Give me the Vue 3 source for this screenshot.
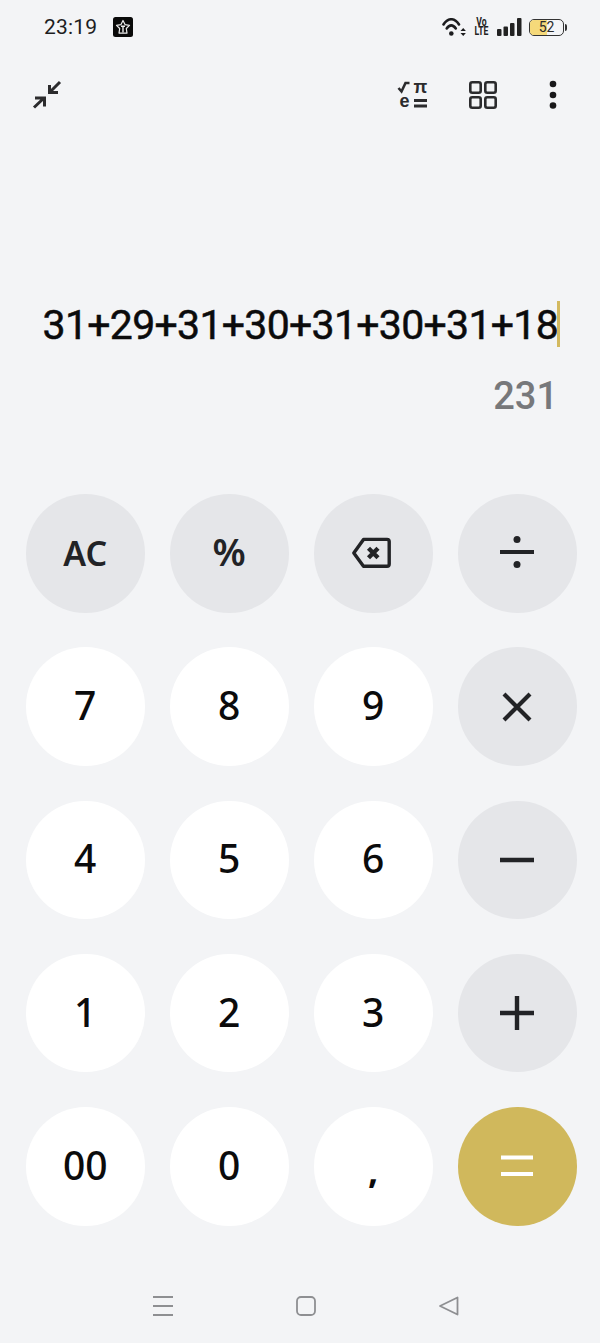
<script setup>
const keys = [
  { label: 'AC', kind: 'op', cls: 'ac' },
  { label: '%', kind: 'op', cls: 'pct' },
  { icon: 'back', kind: 'op' },
  { icon: 'divide', kind: 'op' },
  { label: '7' },
  { label: '8' },
  { label: '9' },
  { icon: 'times', kind: 'op' },
  { label: '4' },
  { label: '5' },
  { label: '6' },
  { icon: 'minus', kind: 'op' },
  { label: '1' },
  { label: '2' },
  { label: '3' },
  { icon: 'plus', kind: 'op' },
  { label: '00' },
  { label: '0' },
  { label: ',', cls: 'comma' },
  { icon: 'equals', kind: 'eq' }
]
</script>

<template>
  <div class="phone">
    <div class="status">
      <span class="time">23:19</span>
      <svg class="notif" width="20" height="20" viewBox="0 0 20 20">
        <rect width="20" height="20" rx="2.5" fill="#0a0a0a" />
        <path d="M10 3.500l2 4.100 4.500.7-3.200 3.200.7 4.600H6l.7-4.600-3.200-3.200L8 7.600z" fill="none" stroke="#eee" stroke-width="1.200" stroke-linejoin="round" />
        <path d="M10 9.500v6M8 9.300h4" stroke="#eee" stroke-width="1.400" />
      </svg>
      <div class="status-right">
        <svg width="25" height="19" viewBox="0 0 25 19" fill="none" stroke="#1c1c1e" stroke-linecap="round">
          <path d="M1.500 6.500C6 -0.500 12.500 -0.500 17 6.500" stroke-width="2.600" />
          <path d="M4.700 10.500C7.500 6.300 11 6.300 13.800 10.500" stroke-width="2.600" />
          <circle cx="9.300" cy="15.500" r="2.300" fill="#1c1c1e" stroke="none" />
          <path d="M18.500 13l2.700-3 2.700 3zM18.500 15l2.700 3 2.700-3z" fill="#1c1c1e" stroke="none" />
        </svg>
        <div class="volte"><span>Vo</span><span>LTE</span></div>
        <svg class="bars" width="25" height="18" viewBox="0 0 25 18" fill="#222">
          <rect x="0" y="11" width="4.500" height="7" rx="1" />
          <rect x="6.500" y="8.500" width="4.500" height="9.500" rx="1" />
          <rect x="13" y="5" width="4.500" height="13" rx="1" />
          <rect x="20" y="0" width="4.500" height="18" rx="1" />
        </svg>
        <div class="battery">
          <div class="battery-body"><div class="battery-fill"></div><span>52</span></div>
          <div class="battery-tip"></div>
        </div>
      </div>
    </div>

    <div class="toolbar">
      <svg width="30" height="30" viewBox="0 0 30 30" fill="none" stroke="#2b2b2d" stroke-width="3">
        <path d="M28 2L17.500 12.500M17.500 5v7.500h8.500" />
        <path d="M2 27.500L12 18M3 18h9.500v8.500" />
      </svg>
      <div class="tools">
        <svg class="sci" width="32" height="34" viewBox="0 -3 32 34">
          <path d="M1.500 7l3 3.500L8.500 2h4" fill="none" stroke="#2b2b2d" stroke-width="2.600" />
          <text x="16.500" y="12" class="sci-pi">π</text>
          <text x="2.500" y="26" class="sci-e">e</text>
          <path d="M17 19.500h13M17 25h13" stroke="#2b2b2d" stroke-width="2.800" />
        </svg>
        <svg class="grid-ic" width="28" height="28" viewBox="0 0 28 28" fill="none" stroke="#2b2b2d" stroke-width="2.600">
          <rect x="1.300" y="1.300" width="10.400" height="10.400" rx="2" />
          <rect x="16.300" y="1.300" width="10.400" height="10.400" rx="2" />
          <rect x="1.300" y="16.300" width="10.400" height="10.400" rx="2" />
          <rect x="16.300" y="16.300" width="10.400" height="10.400" rx="2" />
        </svg>
        <svg class="kebab" width="8" height="30" viewBox="0 0 8 30" fill="#18181a">
          <circle cx="4" cy="4" r="3.300" />
          <circle cx="4" cy="15" r="3.300" />
          <circle cx="4" cy="25.500" r="3.300" />
        </svg>
      </div>
    </div>

    <div class="display">
      <div class="expr">31+29+31+30+31+30+31+18<i class="caret"></i></div>
      <div class="result">231</div>
    </div>

    <div class="keypad">
      <button v-for="(k, i) in keys" :key="i" class="key" :class="[k.kind, k.cls]">
        <template v-if="k.label">{{ k.label }}</template>
        <svg v-else width="44" height="44" viewBox="0 0 44 44" fill="none" stroke="#222326" stroke-width="4.400">
          <template v-if="k.icon === 'back'">
            <path d="M12.500 8.400H36a2.200 2.200 0 0 1 2.200 2.200v22.400a2.200 2.200 0 0 1-2.200 2.200H12.500L2.800 22z" stroke-width="3.400" stroke-linejoin="round" />
            <path d="M17.500 17.300l9.500 9.500M27 17.300l-9.500 9.500" stroke-width="4.400" />
          </template>
          <template v-else-if="k.icon === 'divide'">
            <path d="M5 21h34" stroke-width="3.800" />
            <circle cx="22" cy="8.500" r="3.500" fill="#222326" stroke="none" />
            <circle cx="22" cy="33.500" r="3.500" fill="#222326" stroke="none" />
          </template>
          <path v-else-if="k.icon === 'times'" d="M9 9l26 26M35 9L9 35" stroke-width="4.200" />
          <path v-else-if="k.icon === 'minus'" d="M5 22h34" />
          <path v-else-if="k.icon === 'plus'" d="M5 22h34M22 5v34" />
          <path v-else-if="k.icon === 'equals'" d="M6 13.500h32M6 30h32" stroke="#fff" stroke-width="4" />
        </svg>
      </button>
    </div>

    <div class="navbar">
      <svg width="22" height="22" viewBox="0 0 22 22" fill="none" stroke="#8e8f92" stroke-width="1.800">
        <path d="M1 2h20M1 11h20M1 20h20" />
      </svg>
      <svg width="22" height="22" viewBox="0 0 22 22" fill="none" stroke="#8e8f92" stroke-width="1.800">
        <rect x="2" y="2" width="18" height="18" rx="4" />
      </svg>
      <svg width="22" height="22" viewBox="0 0 22 22" fill="none" stroke="#8e8f92" stroke-width="1.800" stroke-linejoin="round">
        <path d="M2 11L19.500 2.500v17z" />
      </svg>
    </div>
  </div>
</template>

<style>
html, body {
  margin: 0;
  background: #f3f4f6;
}
</style>

<style scoped>
.phone {
  width: 600px;
  height: 1343px;
  background: #f3f4f6;
  display: flex;
  flex-direction: column;
  font-family: Roboto, "Liberation Sans", sans-serif;
  overflow: hidden;
}

.status {
  height: 54px;
  box-sizing: border-box;
  padding: 0 33px 0 44px;
  display: flex;
  align-items: center;
}
.time {
  font-size: 21px;
  letter-spacing: 0.2px;
  color: #1d1d1f;
  width: 69px;
}
.status-right {
  margin-left: auto;
  display: flex;
  align-items: center;
  gap: 8px;
}
.volte {
  display: flex;
  flex-direction: column;
  align-items: center;
  font-size: 12px;
  font-weight: 700;
  line-height: 9px;
  color: #222;
  width: 13px;
  transform: scaleX(0.72);
}
.bars {
  margin-left: 1px;
}
.battery {
  display: flex;
  align-items: center;
  margin-left: -1px;
}
.battery-body {
  position: relative;
  width: 35px;
  height: 17px;
  box-sizing: border-box;
  border: 1.5px solid #333;
  border-radius: 5px;
  overflow: hidden;
  display: flex;
  align-items: center;
  justify-content: center;
  font-size: 14px;
  color: #2a2a2a;
}
.battery-fill {
  position: absolute;
  left: 0;
  top: 0;
  bottom: 0;
  width: 52%;
  background: #f5d97a;
}
.battery-body span {
  position: relative;
}
.battery-tip {
  width: 2px;
  height: 7px;
  margin-left: 1px;
  background: #333;
  border-radius: 0 2px 2px 0;
}

.toolbar {
  height: 82px;
  box-sizing: border-box;
  padding: 0 43px 0 32px;
  display: flex;
  align-items: center;
  justify-content: space-between;
}
.tools {
  display: flex;
  align-items: center;
}
.grid-ic {
  margin-left: 40px;
}
.kebab {
  margin-left: 52px;
}
.sci-pi,
.sci-e {
  font-family: "Liberation Sans", sans-serif;
  font-weight: 700;
  font-size: 18px;
  fill: #2b2b2d;
}

.display {
  height: 358px;
  box-sizing: border-box;
  padding: 165px 42px 0 0;
  display: flex;
  flex-direction: column;
  align-items: flex-end;
}
.expr {
  position: relative;
  font-size: 41px;
  line-height: 48px;
  letter-spacing: -0.7px;
  -webkit-text-stroke: 0.5px #0b0b0c;
  color: #0b0b0c;
  white-space: nowrap;
}
.caret {
  position: absolute;
  right: -1.500px;
  top: 0;
  width: 2.500px;
  height: 46px;
  background: #d3b95f;
}
.result {
  margin-top: 23px;
  font-size: 38px;
  font-weight: 500;
  line-height: 48px;
  color: #77787b;
}

.keypad {
  margin-left: 26px;
  display: grid;
  grid-template-columns: repeat(4, 118.500px);
  grid-auto-rows: 118.500px;
  column-gap: 25.500px;
  row-gap: 34.750px;
}
.key {
  border: none;
  padding: 0 0 4px;
  border-radius: 50%;
  background: #fff;
  display: flex;
  align-items: center;
  justify-content: center;
  font-family: "Noto Sans", Roboto, sans-serif;
  font-size: 39px;
  font-weight: 540;
  color: #0b0b0c;
}
.key.op {
  background: #e5e6e9;
  color: #222326;
}
.key.eq {
  background: #d0b85c;
  padding: 0;
}
.key.op:has(svg) {
  padding: 0;
}
.ac {
  font-size: 34px;
  font-weight: 560;
  padding-bottom: 0;
}
.pct {
  font-size: 38px;
  font-weight: 560;
}
.comma {
  font-size: 36px;
  font-weight: 700;
  padding: 6px 0 0;
}

.navbar {
  margin-top: auto;
  height: 75px;
  box-sizing: border-box;
  padding: 0 140px 0 152px;
  display: flex;
  align-items: center;
  justify-content: space-between;
}
</style>
